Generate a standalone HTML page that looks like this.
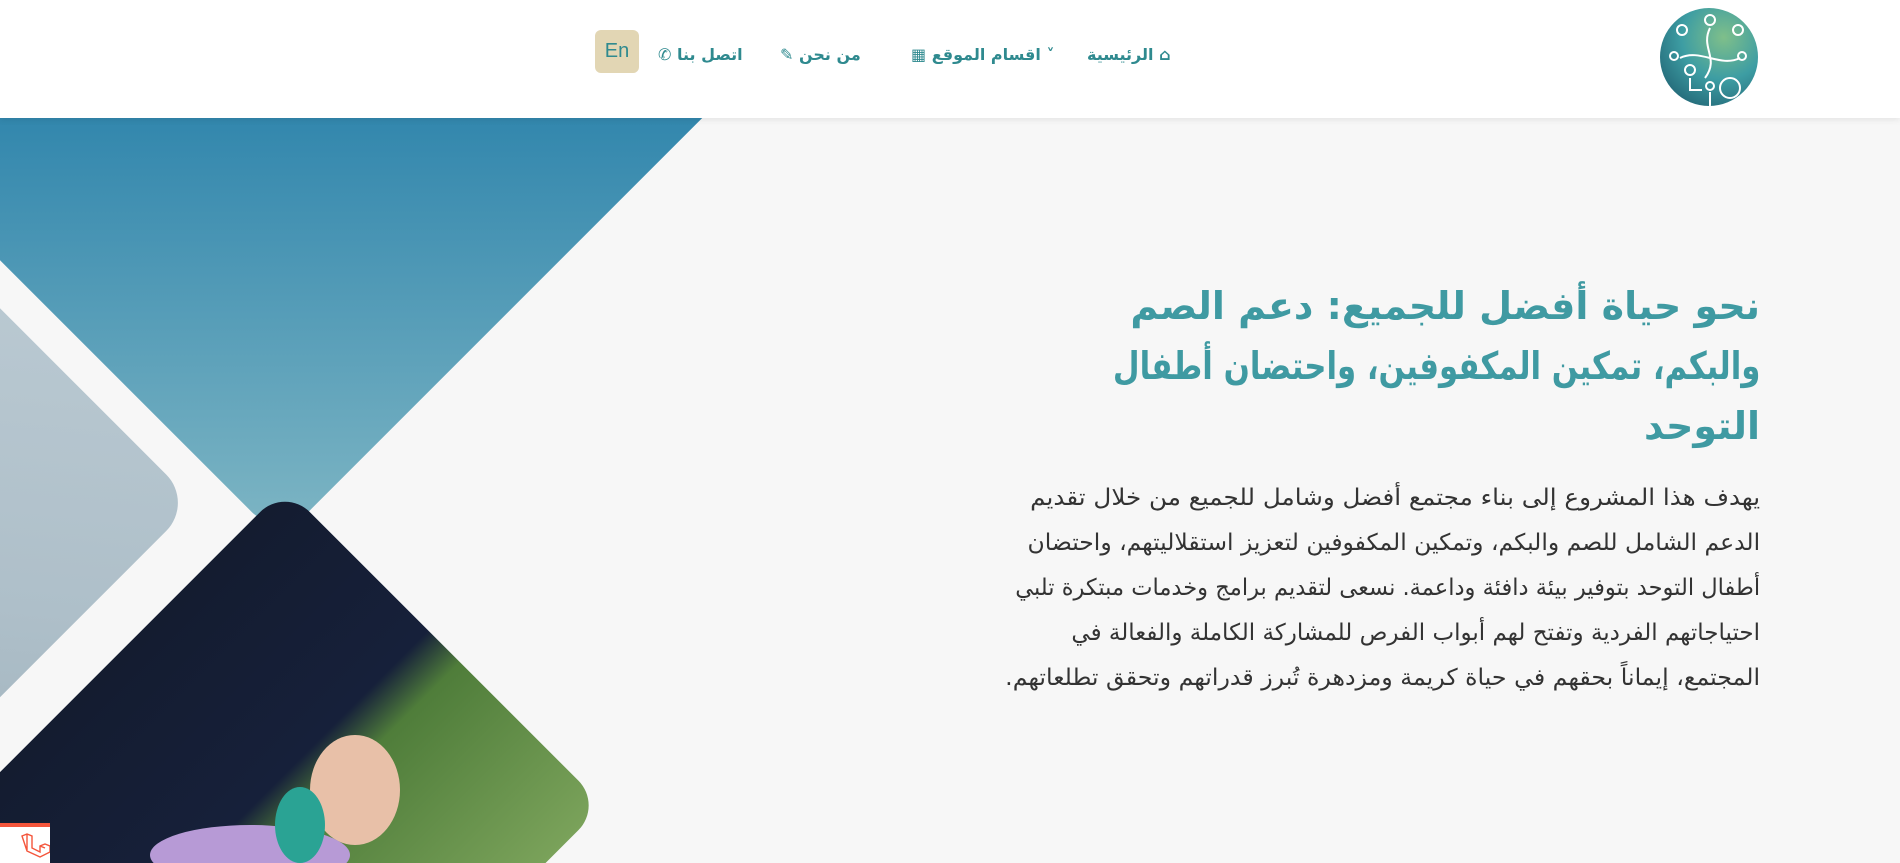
<!DOCTYPE html>
<html lang="ar" dir="rtl"><head><meta charset="utf-8">
<style>
*{margin:0;padding:0;box-sizing:border-box}
html,body{width:1900px;height:863px;overflow:hidden}
body{background:#f7f7f7;font-family:"DejaVu Sans","Liberation Sans",sans-serif;position:relative}
header{position:absolute;left:0;top:0;width:1900px;height:118px;background:#fff;box-shadow:0 2px 6px rgba(0,0,0,.08);z-index:5}
.nav{position:absolute;top:45px;font-size:16px;font-weight:bold;color:#2f8a8f;white-space:nowrap;direction:rtl}
.en{position:absolute;left:595px;top:30px;width:44px;height:43px;background:#e2d6b4;border-radius:6px;color:#2f8a8f;font-family:"Liberation Sans",sans-serif;font-size:20px;text-align:center;line-height:43px;direction:ltr}
.logo{position:absolute;left:1660px;top:8px;width:98px;height:98px;border-radius:50%;background:radial-gradient(circle at 65% 30%,#7fbf8a,#3d9da3 45%,#1f5f70 90%);overflow:hidden}
h1{position:absolute;right:140px;top:276px;font-size:38px;line-height:60px;color:#3f9aa2;font-weight:bold;text-align:right;white-space:nowrap}
p{position:absolute;right:140px;top:476px;font-size:23px;line-height:45px;color:#333;text-align:right;white-space:nowrap}
.l{display:block;transform-origin:right center}
svg.art{position:absolute;left:0;top:0}
.lar{position:absolute;left:0;top:823px;width:50px;height:40px;background:#fff;border-top:4px solid #f4553b;z-index:6;overflow:hidden}
</style></head><body>
<svg class="art" width="760" height="863" viewBox="0 0 760 863">
<defs>
<linearGradient id="g1" x1="0" y1="0" x2="1" y2="1"><stop offset="0" stop-color="#1c4e62"/><stop offset=".4" stop-color="#2c6f88"/><stop offset=".6" stop-color="#1a78a6"/><stop offset="1" stop-color="#7fb6c4"/></linearGradient>
<linearGradient id="g2" x1="0" y1="0" x2="1" y2="1"><stop offset="0" stop-color="#c9d6dd"/><stop offset=".6" stop-color="#aebfc9"/><stop offset="1" stop-color="#8fa3ad"/></linearGradient>
<linearGradient id="g3" x1="0" y1="0" x2="1" y2="0"><stop offset="0" stop-color="#141c30"/><stop offset=".45" stop-color="#16203a"/><stop offset=".55" stop-color="#4f7d3a"/><stop offset="1" stop-color="#7aa25a"/></linearGradient>
</defs>
<g transform="rotate(45)">
<rect x="-400" y="-800" width="980" height="984" rx="40" fill="url(#g1)"/>
<rect x="-500" y="218" width="993" height="800" rx="40" fill="url(#g2)"/>
<rect x="546" y="143" width="450" height="800" rx="35" fill="url(#g3)"/>
</g>
<ellipse cx="355" cy="790" rx="45" ry="55" fill="#e8c0a8"/>
<ellipse cx="250" cy="855" rx="100" ry="30" fill="#b79ad6"/>
<ellipse cx="300" cy="825" rx="25" ry="38" fill="#2aa394"/>
</svg>
<header>
<div class="logo">
<svg width="98" height="98" viewBox="0 0 98 98" fill="none" stroke="#fff" stroke-width="2"><circle cx="50" cy="12" r="5"/><circle cx="22" cy="22" r="5"/><circle cx="78" cy="22" r="5"/><circle cx="14" cy="48" r="4"/><circle cx="82" cy="48" r="4"/><circle cx="30" cy="62" r="5"/><circle cx="70" cy="80" r="10"/><path d="M50 20 C40 40 60 50 45 70 M20 50 C40 40 60 60 80 50 M30 70 v12 h12"/><circle cx="50" cy="78" r="4"/><path d="M50 84 v14"/></svg>
</div>
<div class="nav" style="left:1087px">⌂ الرئيسية</div>
<div class="nav" style="left:911px">˅ اقسام الموقع ▦</div>
<div class="nav" style="left:780px">من نحن ✎</div>
<div class="nav" style="left:658px">اتصل بنا ✆</div>
<div class="en">En</div>
</header>
<h1><span class="l">نحو حياة أفضل للجميع: دعم الصم</span><span class="l" style="transform:scaleX(.81)">والبكم، تمكين المكفوفين، واحتضان أطفال</span><span class="l">التوحد</span></h1>
<p><span class="l" style="transform:scaleX(1.07)">يهدف هذا المشروع إلى بناء مجتمع أفضل وشامل للجميع من خلال تقديم</span><span class="l" style="transform:scaleX(1.02)">الدعم الشامل للصم والبكم، وتمكين المكفوفين لتعزيز استقلاليتهم، واحتضان</span><span class="l" style="transform:scaleX(.98)">أطفال التوحد بتوفير بيئة دافئة وداعمة. نسعى لتقديم برامج وخدمات مبتكرة تلبي</span><span class="l">احتياجاتهم الفردية وتفتح لهم أبواب الفرص للمشاركة الكاملة والفعالة في</span><span class="l" style="transform:scaleX(1.03)">المجتمع، إيماناً بحقهم في حياة كريمة ومزدهرة تُبرز قدراتهم وتحقق تطلعاتهم.</span></p>
<div class="lar"><svg width="30" height="26" viewBox="0 0 30 26" style="margin:6px 0 0 12px" fill="none" stroke="#f4553b" stroke-width="1.4"><path d="M2 3 l5-2 5 2 v12 l8 4 v-6 l5-2 5 2 v6 l-10 5 -13-6z M7 1 v16 M20 13 l5 2"/></svg></div>
</body></html>
